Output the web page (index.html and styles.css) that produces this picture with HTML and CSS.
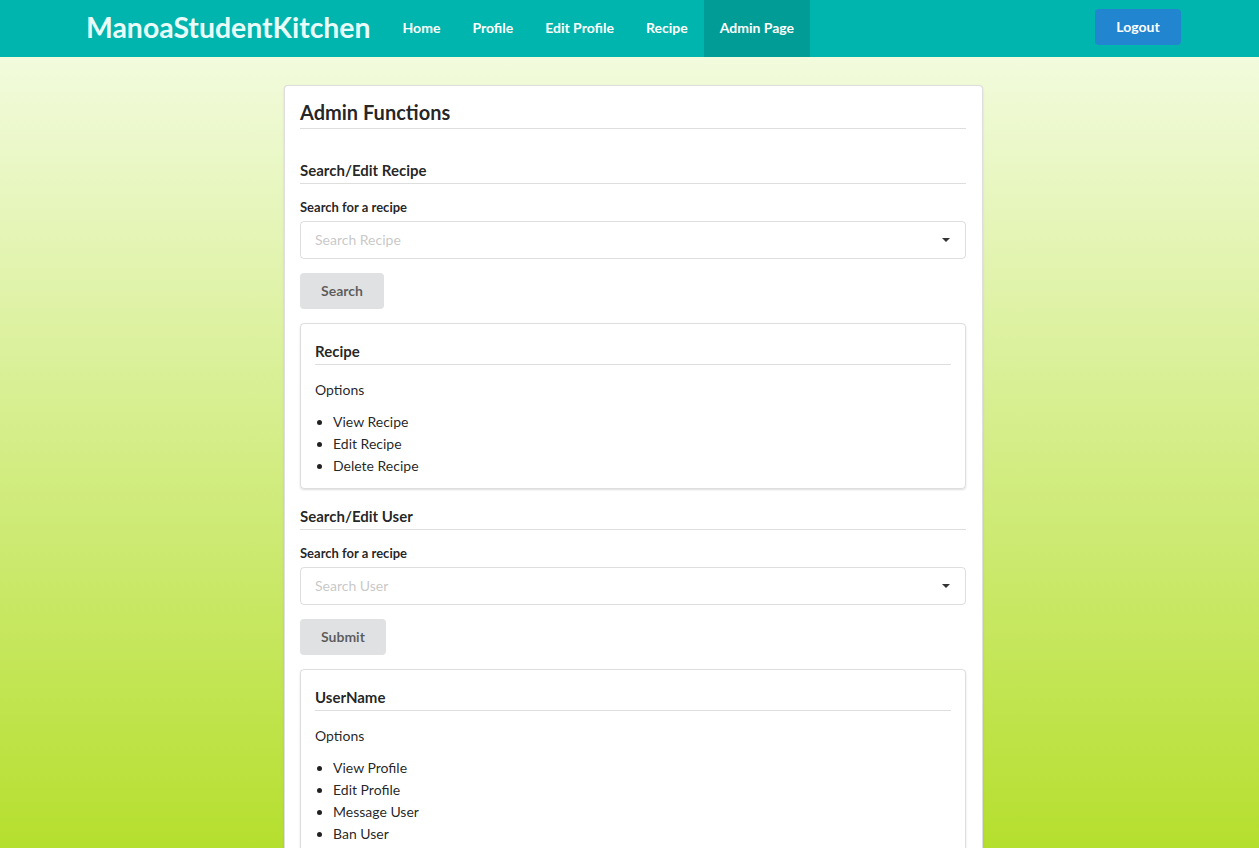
FILE: index.html
```html
<!DOCTYPE html>
<html lang="en">
<head>
<meta charset="utf-8">
<title>ManoaStudentKitchen - Admin</title>
<link rel="stylesheet" href="styles.css">
</head>
<body>
<nav class="navbar">
  <div class="nav-inner">
    <a class="brand">ManoaStudentKitchen</a>
    <a class="nav-item">Home</a>
    <a class="nav-item">Profile</a>
    <a class="nav-item">Edit Profile</a>
    <a class="nav-item">Recipe</a>
    <a class="nav-item active">Admin Page</a>
    <div class="nav-right">
      <button class="logout">Logout</button>
    </div>
  </div>
</nav>
<main class="page">
  <section class="segment">
    <h2 class="title">Admin Functions</h2>

    <h4 class="section-header">Search/Edit Recipe</h4>
    <label class="field-label">Search for a recipe</label>
    <div class="dropdown">
      <span class="placeholder">Search Recipe</span>
      <span class="caret"></span>
    </div>
    <button class="btn">Search</button>
    <div class="card">
      <h4 class="card-header">Recipe</h4>
      <p class="options">Options</p>
      <ul class="opt-list">
        <li>View Recipe</li>
        <li>Edit Recipe</li>
        <li>Delete Recipe</li>
      </ul>
    </div>

    <h4 class="section-header second">Search/Edit User</h4>
    <label class="field-label">Search for a recipe</label>
    <div class="dropdown">
      <span class="placeholder">Search User</span>
      <span class="caret"></span>
    </div>
    <button class="btn">Submit</button>
    <div class="card">
      <h4 class="card-header">UserName</h4>
      <p class="options">Options</p>
      <ul class="opt-list">
        <li>View Profile</li>
        <li>Edit Profile</li>
        <li>Message User</li>
        <li>Ban User</li>
      </ul>
    </div>
  </section>
</main>
</body>
</html>
```
FILE: styles.css
```css
* { box-sizing: border-box; }
html, body { margin: 0; padding: 0; }
body {
  font-family: Lato, "Open Sans", "Liberation Sans", sans-serif;
  font-size: 14px;
  color: rgba(0,0,0,0.87);
  background: linear-gradient(to bottom, #f2fbdd 57px, #b5df2e 100%) fixed;
  min-height: 100vh;
}
.navbar {
  background: #00b5ad;
  height: 57px;
}
.nav-inner {
  display: flex;
  align-items: stretch;
  height: 57px;
  padding-left: 70px;
  padding-right: 62px;
}
.brand {
  display: flex;
  align-items: center;
  padding: 0 16px 3px;
  font-size: 28.4px;
  font-weight: 700;
  color: #e9fcfa;
}
.nav-item {
  display: flex;
  align-items: center;
  padding: 0 16px 3px;
  color: #fff;
  font-weight: 700;
  font-size: 14px;
}
.nav-item.active { background: #009c95; }
.nav-right {
  margin-left: auto;
  display: flex;
  align-items: center;
  padding: 0 16px 3px;
}
.logout {
  font-family: inherit;
  background: #2185d0;
  color: #fff;
  border: 0;
  border-radius: 4px;
  font-weight: 700;
  font-size: 14px;
  width: 86px;
  height: 36px;
  padding: 0 0 2px;
}
.page {
  display: flex;
  justify-content: center;
  padding-left: 8px;
  padding-top: 28px;
}
.segment {
  width: 699px;
  background: #fff;
  border: 1px solid rgba(34,36,38,0.15);
  border-radius: 4px;
  box-shadow: 0 1px 2px rgba(34,36,38,0.15);
  padding: 14px 16px 20px 15px;
}
.title {
  margin: 0;
  font-size: 20px;
  line-height: 24px;
  font-weight: 700;
  padding-bottom: 4px;
  border-bottom: 1px solid rgba(34,36,38,0.15);
  color: rgba(0,0,0,0.87);
}
.section-header {
  margin: 32px 0 0;
  font-size: 15px;
  line-height: 18px;
  font-weight: 700;
  padding-bottom: 4px;
  border-bottom: 1px solid rgba(34,36,38,0.15);
}
.section-header.second { margin-top: 18px; }
.field-label {
  display: block;
  margin-top: 15px;
  font-size: 13px;
  line-height: 16px;
  font-weight: 700;
}
.dropdown {
  margin-top: 6px;
  height: 38px;
  border: 1px solid rgba(34,36,38,0.15);
  border-radius: 4px;
  display: flex;
  align-items: center;
  padding: 0 14px 1px;
}
.placeholder {
  color: rgba(191,191,191,0.87);
  font-size: 14px;
}
.caret {
  margin-left: auto;
  width: 0;
  height: 0;
  border-left: 4px solid transparent;
  border-right: 4px solid transparent;
  border-top: 4px solid #333;
  margin-right: 1px;
}
.btn {
  display: block;
  margin-top: 14px;
  height: 36px;
  padding: 0 21px 2px;
  background: #e0e1e2;
  color: rgba(0,0,0,0.6);
  border: 0;
  border-radius: 4px;
  font-family: inherit;
  font-size: 14px;
  font-weight: 700;
}
.card {
  margin-top: 14px;
  border: 1px solid rgba(34,36,38,0.15);
  border-radius: 4px;
  box-shadow: 0 1px 2px rgba(34,36,38,0.15);
  padding: 18px 14px 11px 14px;
}
.card-header {
  margin: 0;
  font-size: 15px;
  line-height: 18px;
  font-weight: 700;
  padding-bottom: 4px;
  border-bottom: 1px solid rgba(34,36,38,0.15);
}
.options {
  margin: 15px 0 0;
  line-height: 20px;
}
.opt-list {
  margin: 11px 0 0;
  padding-left: 18px;
}
.opt-list li { line-height: 22px; }
```
